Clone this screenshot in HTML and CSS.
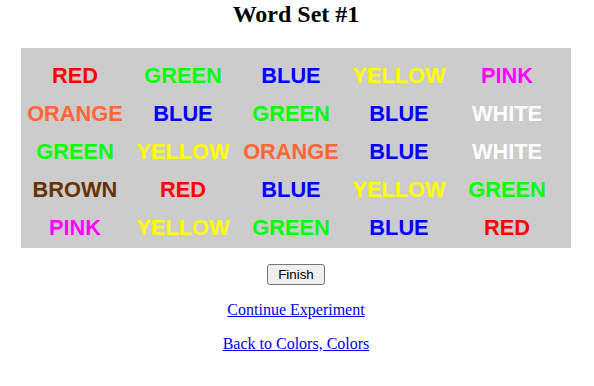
FILE: index.html
```html
<!DOCTYPE html>
<html lang="en">
<head>
  <meta charset="UTF-8">
  <title>Word Set #1</title>
  <link rel="stylesheet" href="styles.css">
</head>
<body>
  <h2 class="title">Word Set #1</h2>

  <div class="word-grid">
    <span class="red">RED</span>
    <span class="green">GREEN</span>
    <span class="blue">BLUE</span>
    <span class="yellow">YELLOW</span>
    <span class="pink">PINK</span>

    <span class="orange">ORANGE</span>
    <span class="blue">BLUE</span>
    <span class="green">GREEN</span>
    <span class="blue">BLUE</span>
    <span class="white">WHITE</span>

    <span class="green">GREEN</span>
    <span class="yellow">YELLOW</span>
    <span class="orange">ORANGE</span>
    <span class="blue">BLUE</span>
    <span class="white">WHITE</span>

    <span class="brown">BROWN</span>
    <span class="red">RED</span>
    <span class="blue">BLUE</span>
    <span class="yellow">YELLOW</span>
    <span class="green">GREEN</span>

    <span class="pink">PINK</span>
    <span class="yellow">YELLOW</span>
    <span class="green">GREEN</span>
    <span class="blue">BLUE</span>
    <span class="red">RED</span>
  </div>

  <form class="finish-form" onsubmit="return false;">
    <button type="submit" class="finish-btn">Finish</button>
  </form>

  <p class="nav-link"><a href="#">Continue Experiment</a></p>
  <p class="nav-link"><a href="#">Back to Colors, Colors</a></p>
</body>
</html>
```

FILE: styles.css
```css
body {
  margin: 0 9px 0 7px;
  font-family: "Liberation Serif", "Times New Roman", serif;
  font-size: 16px;
  background: #fff;
  color: #000;
}

.title {
  margin: 0 0 20px 0;
  font-size: 24px;
  font-weight: bold;
  text-align: center;
  line-height: 28px;
}

.word-grid {
  width: 550px;
  box-sizing: border-box;
  margin: 0 auto;
  padding: 9px 10px 1px 0;
  background-color: #cccccc;
  display: grid;
  grid-template-columns: repeat(5, 1fr);
  grid-auto-rows: 38px;
  align-items: center;
  justify-items: center;
  font-family: "Liberation Sans", Arial, sans-serif;
  font-weight: bold;
  font-size: 21.8px;
  white-space: nowrap;
}

.red { color: #ff0000; }
.green { color: #00ff00; }
.blue { color: #0000ff; }
.yellow { color: #ffff00; }
.pink { color: #ff00ff; }
.orange { color: #ff6633; }
.white { color: #ffffff; }
.brown { color: #663300; }

.finish-form {
  display: flex;
  justify-content: center;
  margin: 16px 0 0 0;
}

.finish-btn {
  font-family: "Liberation Sans", Arial, sans-serif;
  font-size: 13.33px;
  padding: 1px 10px;
  height: 21px;
  background-color: #efefef;
  border: 1px solid #767676;
  border-radius: 3px;
  color: #000;
}

.nav-link {
  text-align: center;
  margin: 16px 0;
}

.nav-link a {
  color: #0000ee;
}
```
